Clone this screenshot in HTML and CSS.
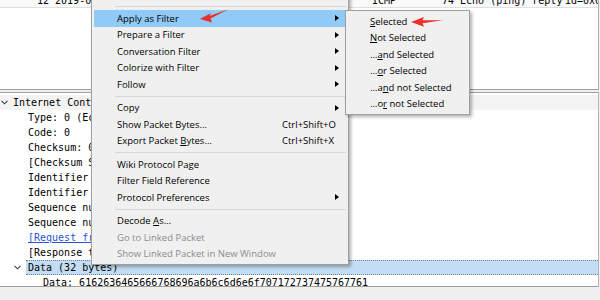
FILE: index.html
```html
<!DOCTYPE html>
<html lang="en">
<head>
    <meta charset="UTF-8">
    <title>Wireshark - Apply as Filter</title>
    <link rel="stylesheet" href="styles.css">
</head>
<body>
    <div class="app">
        <div class="packet-list">
            <div class="pkt-row">
                <span>12 2019-08-07 10:21:15.123806 192.168.1.5</span>
                <span>ICMP</span>
                <span>74 Echo (ping) reply</span>
                <span>id=0x0001, seq=11/2816</span>
            </div>
        </div>
        <div class="splitter"></div>
        <div class="details">
            <div class="tree-row hover">
                <span class="twisty"><svg width="7" height="5" viewBox="0 0 7 5"><path d="M0.5 0.8 L3.5 3.8 L6.5 0.8" fill="none" stroke="#3c3c3c" stroke-width="1.1"/></svg></span>
                <span>Internet Control Message Protocol</span>
            </div>
            <div class="tree-row leaf1">Type: 0 (Echo (ping) reply)</div>
            <div class="tree-row leaf1">Code: 0</div>
            <div class="tree-row leaf1">Checksum: 0x554d [correct]</div>
            <div class="tree-row leaf1">[Checksum Status: Good]</div>
            <div class="tree-row leaf1">Identifier (BE): 1 (0x0001)</div>
            <div class="tree-row leaf1">Identifier (LE): 256 (0x0100)</div>
            <div class="tree-row leaf1">Sequence number (BE): 11 (0x000b)</div>
            <div class="tree-row leaf1">Sequence number (LE): 2816 (0x0b00)</div>
            <div class="tree-row leaf1"><span class="link">[Request frame: 11]</span></div>
            <div class="tree-row leaf1">[Response time: 0.245 ms]</div>
            <div class="tree-row lv1">
                <span class="twisty"><svg width="7" height="5" viewBox="0 0 7 5"><path d="M0.5 0.8 L3.5 3.8 L6.5 0.8" fill="none" stroke="#3c3c3c" stroke-width="1.1"/></svg></span>
                <span class="sel">Data (32 bytes)</span>
            </div>
            <div class="tree-row leaf2">Data: 6162636465666768696a6b6c6d6e6f707172737475767761</div>
        </div>
        <div class="status"></div>

        <div class="menu main-menu">
            <div class="item"><span class="label">Apply as Column</span><span class="key">Ctrl+Shift+I</span><span class="arrow"></span></div>
            <div class="sep"></div>
            <div class="item active"><span class="label">Apply as Filter</span><span class="key"></span><span class="arrow sub"></span></div>
            <div class="item"><span class="label">Prepare a Filter</span><span class="key"></span><span class="arrow sub"></span></div>
            <div class="item"><span class="label">Conversation Filter</span><span class="key"></span><span class="arrow sub"></span></div>
            <div class="item"><span class="label">Colorize with Filter</span><span class="key"></span><span class="arrow sub"></span></div>
            <div class="item"><span class="label">Follow</span><span class="key"></span><span class="arrow sub"></span></div>
            <div class="sep"></div>
            <div class="item"><span class="label">Copy</span><span class="key"></span><span class="arrow sub"></span></div>
            <div class="item"><span class="label">Show Packet Bytes…</span><span class="key">Ctrl+Shift+O</span><span class="arrow"></span></div>
            <div class="item"><span class="label">Export Packet <u>B</u>ytes…</span><span class="key">Ctrl+Shift+X</span><span class="arrow"></span></div>
            <div class="sep"></div>
            <div class="item"><span class="label">Wiki Protocol Page</span><span class="key"></span><span class="arrow"></span></div>
            <div class="item"><span class="label">Filter Field Reference</span><span class="key"></span><span class="arrow"></span></div>
            <div class="item"><span class="label">Protocol Preferences</span><span class="key"></span><span class="arrow sub"></span></div>
            <div class="sep"></div>
            <div class="item"><span class="label">Decode <u>A</u>s…</span><span class="key"></span><span class="arrow"></span></div>
            <div class="item disabled"><span class="label">Go to Linked Packet</span><span class="key"></span><span class="arrow"></span></div>
            <div class="item disabled"><span class="label">Show Linked Packet in New Window</span><span class="key"></span><span class="arrow"></span></div>
        </div>

        <div class="menu submenu">
            <div class="item"><span class="label"><u>S</u>elected</span></div>
            <div class="item"><span class="label"><u>N</u>ot Selected</span></div>
            <div class="item"><span class="label">…<u>a</u>nd Selected</span></div>
            <div class="item"><span class="label">…<u>o</u>r Selected</span></div>
            <div class="item"><span class="label">…a<u>n</u>d not Selected</span></div>
            <div class="item"><span class="label">…o<u>r</u> not Selected</span></div>
        </div>

        <svg class="marks" width="600" height="300" viewBox="0 0 600 300">
            <polygon points="200,19 211,13 209.5,16 229,9 210.5,18.5 212,22.5" fill="#e8312b"/>
            <polygon points="411,22 424,17 422.5,20.3 443,20.2 422.5,23.2 424,26.8" fill="#e8312b"/>
        </svg>
    </div>
</body>
</html>
```

FILE: styles.css
```css
body {
    margin: 0;
    background: #f0f0f0;
}
.app {
    position: relative;
    width: 600px;
    height: 300px;
    overflow: hidden;
    background: #f0f0f0;
    font-family: "DejaVu Sans Mono", monospace;
    font-size: 10px;
    color: #000;
}
.packet-list {
    width: 598px;
    height: 89px;
    background: #fff;
    border-bottom: 1px solid #a0a0a0;
    border-right: 1px solid #b4b4b4;
    overflow: hidden;
}
.pkt-row {
    display: grid;
    grid-template-columns: 335px 70px 123px 1fr;
    padding-left: 37px;
    margin-top: -5px;
    height: 12px;
    line-height: 12px;
    background: #fafafa;
    border-bottom: 1px solid #e0e0e0;
    white-space: nowrap;
    overflow: hidden;
}
.pkt-row span {
    overflow: hidden;
}
.splitter {
    height: 2px;
}
.details {
    width: 598px;
    height: 191px;
    padding-top: 2px;
    background: #fff;
    border-top: 1px solid #a0a0a0;
    border-bottom: 1px solid #a0a0a0;
    border-right: 1px solid #b4b4b4;
    overflow: hidden;
}
.tree-row {
    display: flex;
    align-items: center;
    height: 15px;
    line-height: 15px;
    white-space: nowrap;
}
.tree-row.hover { background: #f3f3f3; }
.twisty {
    flex: none;
    width: 13px;
    display: flex;
    align-items: center;
}
.twisty svg { margin-left: 1px; }
.lv1 { padding-left: 13px; }
.leaf1 { padding-left: 28px; }
.leaf2 { padding-left: 43px; }
.link {
    color: #2a52d8;
    text-decoration: underline;
}
.sel {
    flex: 1;
    height: 13px;
    line-height: 13px;
    padding-left: 2px;
    background: #c2ddf4;
    border-top: 1px dotted #6f8294;
    border-bottom: 1px dotted #6f8294;
}
.status {
    height: 13px;
}

/* context menus */
.menu {
    position: absolute;
    padding: 2px;
    background: #f0f0f0;
    border: 1px solid #a0a0a0;
    box-shadow: 2px 2px 3px rgba(0, 0, 0, 0.3);
    font-family: "Open Sans", "Noto Sans", sans-serif;
    font-size: 9.5px;
    color: #000;
    white-space: nowrap;
}
.main-menu {
    left: 91px;
    top: -16.5px;
    width: 252px;
}
.submenu {
    left: 345px;
    top: 10px;
    width: 119px;
}
.item {
    display: flex;
    align-items: center;
    height: 16.5px;
    padding-left: 23px;
    padding-right: 4px;
}
.submenu .item { padding-left: 22px; }
.item .label { flex: 1; }
.item .key { width: 51px; }
.item .arrow {
    width: 9px;
    display: flex;
    align-items: center;
}
.item .arrow.sub::before {
    content: '';
    margin-left: 2px;
    border-left: 4px solid #000;
    border-top: 3.5px solid transparent;
    border-bottom: 3.5px solid transparent;
}
.item.active { background: #91c9f7; }
.item.disabled { color: #8c8c8c; }
.sep {
    height: 1px;
    margin: 3px 0 3px 21px;
    background: #d7d7d7;
}
.marks {
    position: absolute;
    left: 0;
    top: 0;
    pointer-events: none;
}
```
